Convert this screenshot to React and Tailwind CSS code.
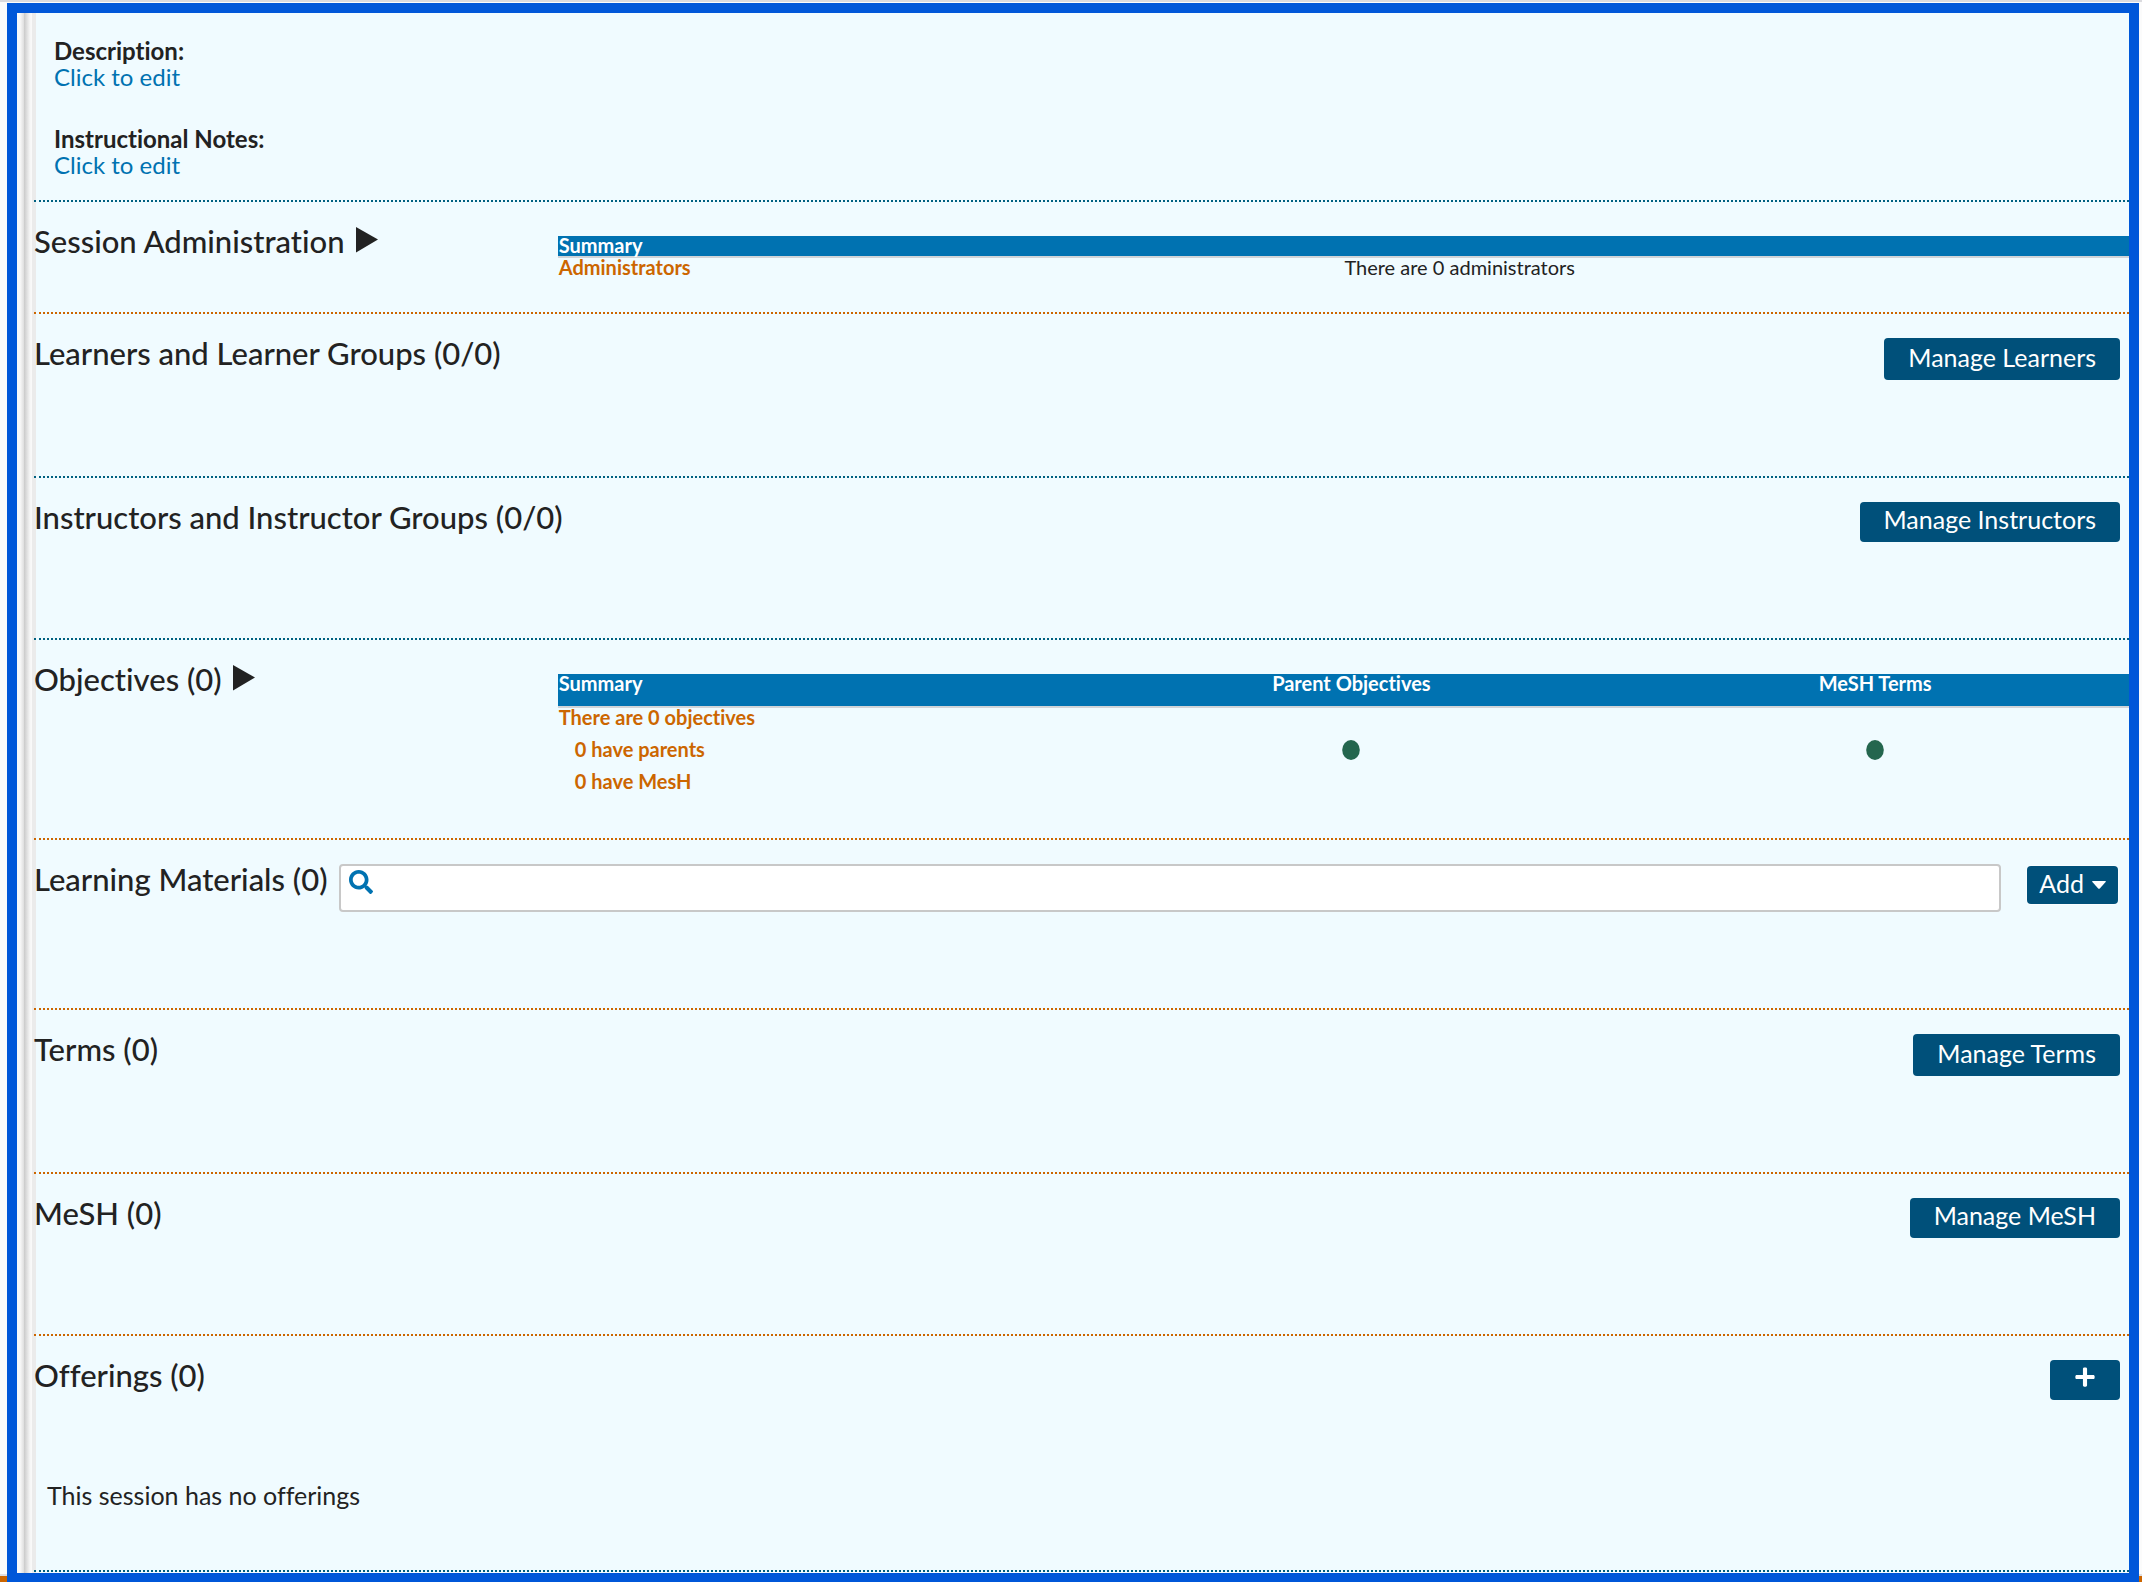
import React from "react";
import { FaPlus, FaSearch } from "react-icons/fa";

function Section({ tone = "orange", className = "", children }) {
  const border = tone === "teal" ? "border-[#006080]" : "border-[#cc6600]";
  return (
    <section className={`flex items-start border-b-2 border-dotted ${border} ${className}`}>
      {children}
    </section>
  );
}

function Title({ children }) {
  return <h2 className="mt-[21px] text-[31px] leading-9 font-medium whitespace-nowrap">{children}</h2>;
}

function ExpandTitle({ children }) {
  return (
    <Title>
      <button type="button" className="flex items-start gap-[11px]">
        <span>{children}</span>
        <svg viewBox="0 0 22 26" className="mt-1 h-[26px] w-[22px]" fill="currentColor" aria-hidden="true">
          <path d="M0 0L22 12.5L0 25.5Z" />
        </svg>
      </button>
    </Title>
  );
}

function ManageButton({ tall = false, label, children }) {
  return (
    <button
      type="button"
      aria-label={label}
      className={`mt-6 mr-[9px] ml-auto rounded bg-[#00507a] px-6 pb-2.5 text-[25px] leading-[26px] text-white ${tall ? "pt-1.5" : "pt-1"}`}
    >
      {children}
    </button>
  );
}

function ManageSection({ tone, title, action, tall }) {
  return (
    <Section tone={tone} className="pb-24">
      <Title>{title}</Title>
      <ManageButton tall={tall}>{action}</ManageButton>
    </Section>
  );
}

function Field({ label }) {
  return (
    <div>
      <div className="font-bold">{label}</div>
      <button type="button" className="block text-[#0072b1]">Click to edit</button>
    </div>
  );
}

function Dot() {
  return (
    <svg viewBox="0 0 18 20" className="mx-auto h-5 w-[18px]" role="img" aria-label="Complete">
      <ellipse cx="9" cy="10" rx="8.8" ry="10" fill="#24664e" />
    </svg>
  );
}

const tableClass = "mt-[34px] mb-[34px] w-full table-fixed border-collapse text-xl leading-[18px]";
const headRow = "bg-[#0072b1] text-white shadow-[0_2px_0_#d0d4d8]";

export default function App() {
  return (
    <div className="flex min-h-screen flex-col border-t-2 border-[#dadade] bg-[linear-gradient(to_top,#cc6600_6px,#dedee2_6px,#dedee2_8px,#fbfbfb_8px)] pt-px pr-[3px] pl-[7px] font-['Lato',sans-serif] text-[#222222] [font-variant-ligatures:none]">
      <main className="flex-1 border-[10px] border-b-[9px] border-[#0057d9] bg-[#f0fbff] bg-[linear-gradient(to_right,#f9f9f9_3px,#dedede_7px,#cacaca_7px,#f6f6f6_13px,#fafafa_15px,#ebebeb_15px,#ebebeb_19px,#f0fbff_19px)] bg-no-repeat pb-px pl-[17px]">
        <Section tone="teal" className="flex-col gap-9 pt-[25px] pb-[22px] pl-5 text-2xl leading-[26px]">
          <Field label="Description:" />
          <Field label="Instructional Notes:" />
        </Section>

        <Section>
          <div className="w-1/4">
            <ExpandTitle>Session Administration</ExpandTitle>
          </div>
          <div className="w-3/4">
            <table className={tableClass}>
              <thead>
                <tr className={headRow}>
                  <th colSpan={2} className="h-5 p-0 pl-px text-left align-top">Summary</th>
                </tr>
              </thead>
              <tbody>
                <tr>
                  <th className="h-[22px] p-0 pt-0.5 pl-px text-left align-top text-[#cc6600]">Administrators</th>
                  <td className="p-0 pt-0.5 pl-px align-top">There are 0 administrators</td>
                </tr>
              </tbody>
            </table>
          </div>
        </Section>

        <ManageSection tone="teal" title="Learners and Learner Groups (0/0)" action="Manage Learners" tall />
        <ManageSection tone="teal" title="Instructors and Instructor Groups (0/0)" action="Manage Instructors" />

        <Section>
          <div className="w-1/4">
            <ExpandTitle>Objectives (0)</ExpandTitle>
          </div>
          <div className="w-3/4">
            <table className={tableClass}>
              <thead>
                <tr className={headRow}>
                  <th className="h-8 p-0 pl-px text-left align-top">Summary</th>
                  <th className="p-0 pl-4 text-center align-top">Parent Objectives</th>
                  <th className="p-0 pl-4 text-center align-top">MeSH Terms</th>
                </tr>
              </thead>
              <tbody className="text-[#cc6600]">
                <tr>
                  <th className="h-[34px] p-0 pt-0.5 pl-px text-left align-top">There are 0 objectives</th>
                  <td />
                  <td />
                </tr>
                <tr>
                  <th className="h-8 p-0 pl-[17px] text-left align-top">0 have parents</th>
                  <td className="p-0 pl-4 align-top"><Dot /></td>
                  <td className="p-0 pl-4 align-top"><Dot /></td>
                </tr>
                <tr>
                  <th className="h-8 p-0 pl-[17px] text-left align-top">0 have MesH</th>
                  <td />
                  <td />
                </tr>
              </tbody>
            </table>
          </div>
        </Section>

        <Section className="pb-24">
          <Title>Learning Materials (0)</Title>
          <label className="relative mt-6 ml-3 block flex-1">
            <FaSearch className="absolute top-1.5 left-2.5 size-6 text-[#0072b1]" aria-hidden="true" />
            <input
              type="search"
              aria-label="Search learning materials"
              className="block h-12 w-full rounded border-2 border-[#c8c8c8] bg-white pr-3 pl-11 text-2xl outline-none"
            />
          </label>
          <button
            type="button"
            className="mt-[26px] mr-[11px] ml-[26px] flex items-center gap-2 rounded bg-[#00507a] px-3 pt-1 pb-2 text-[25px] leading-[26px] text-white ring-1 ring-white/60"
          >
            Add
            <svg viewBox="0 0 14 8" className="mt-1 h-2 w-3.5" fill="currentColor" aria-hidden="true">
              <path d="M0.8 0H13.2Q14.4 0 13.6 1L7.8 7.5Q7 8.2 6.2 7.5L0.4 1Q-0.4 0 0.8 0Z" />
            </svg>
          </button>
        </Section>

        <ManageSection title="Terms (0)" action="Manage Terms" tall />
        <ManageSection title="MeSH (0)" action="Manage MeSH" />

        <Section tone="teal" className="flex-col pb-[62px]">
          <div className="flex w-full items-start">
            <Title>Offerings (0)</Title>
            <ManageButton label="Add offering">
              <span className="flex h-[26px] items-center">
                <FaPlus className="size-[22px]" />
              </span>
            </ManageButton>
          </div>
          <p className="mt-[82px] pl-[13px] text-[25px] leading-[26px]">This session has no offerings</p>
        </Section>
      </main>
    </div>
  );
}
